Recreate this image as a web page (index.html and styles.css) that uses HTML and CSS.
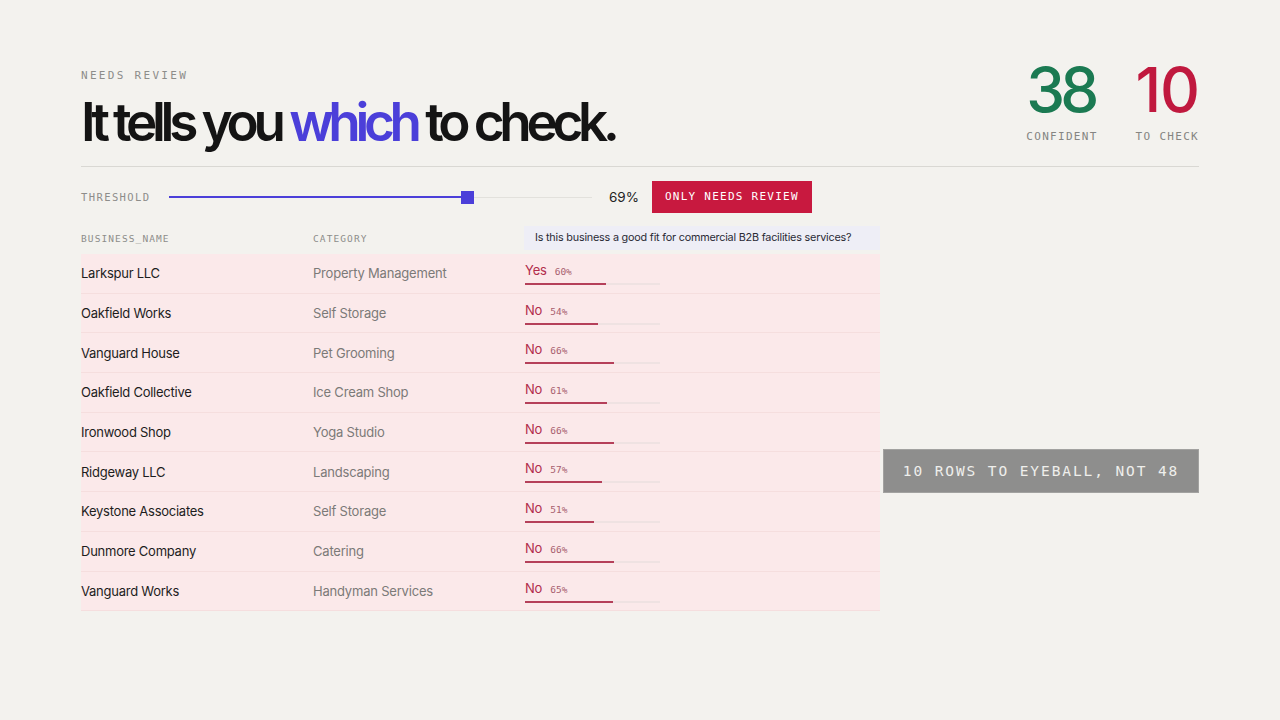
FILE: index.html
```html
<!DOCTYPE html>
<html lang="en">
<head>
  <meta charset="UTF-8">
  <title>Needs review</title>
  <link rel="stylesheet" href="styles.css">
</head>
<body>
<div class="page">
  <div class="top">
    <div class="title-block">
      <div class="eyebrow">NEEDS REVIEW</div>
      <h1 class="headline">It tells you <span class="accent">which</span> to check.</h1>
    </div>
    <div class="stats">
      <div class="stat">
        <div class="stat-num good">38</div>
        <div class="stat-label">CONFIDENT</div>
      </div>
      <div class="stat">
        <div class="stat-num bad">10</div>
        <div class="stat-label">TO CHECK</div>
      </div>
    </div>
  </div>

  <div class="threshold">
    <div class="threshold-label">THRESHOLD</div>
    <div class="slider">
      <div class="slider-fill"></div>
      <div class="slider-handle"></div>
    </div>
    <div class="threshold-value">69%</div>
    <div class="filter-btn">ONLY NEEDS REVIEW</div>
  </div>

  <div class="main">
    <div class="table">
      <div class="thead">
        <div class="th">BUSINESS_NAME</div>
        <div class="th">CATEGORY</div>
        <div class="th question">Is this business a good fit for commercial B2B facilities services?</div>
      </div>

      <div class="row">
        <div class="name">Larkspur LLC</div>
        <div class="cat">Property Management</div>
        <div class="answer">
          <div class="ans-line"><span class="ans">Yes</span><span class="pct">60%</span></div>
          <div class="bar"><div class="bar-fill" style="width: 60%"></div></div>
        </div>
      </div>
      <div class="row">
        <div class="name">Oakfield Works</div>
        <div class="cat">Self Storage</div>
        <div class="answer">
          <div class="ans-line"><span class="ans">No</span><span class="pct">54%</span></div>
          <div class="bar"><div class="bar-fill" style="width: 54%"></div></div>
        </div>
      </div>
      <div class="row">
        <div class="name">Vanguard House</div>
        <div class="cat">Pet Grooming</div>
        <div class="answer">
          <div class="ans-line"><span class="ans">No</span><span class="pct">66%</span></div>
          <div class="bar"><div class="bar-fill" style="width: 66%"></div></div>
        </div>
      </div>
      <div class="row">
        <div class="name">Oakfield Collective</div>
        <div class="cat">Ice Cream Shop</div>
        <div class="answer">
          <div class="ans-line"><span class="ans">No</span><span class="pct">61%</span></div>
          <div class="bar"><div class="bar-fill" style="width: 61%"></div></div>
        </div>
      </div>
      <div class="row">
        <div class="name">Ironwood Shop</div>
        <div class="cat">Yoga Studio</div>
        <div class="answer">
          <div class="ans-line"><span class="ans">No</span><span class="pct">66%</span></div>
          <div class="bar"><div class="bar-fill" style="width: 66%"></div></div>
        </div>
      </div>
      <div class="row">
        <div class="name">Ridgeway LLC</div>
        <div class="cat">Landscaping</div>
        <div class="answer">
          <div class="ans-line"><span class="ans">No</span><span class="pct">57%</span></div>
          <div class="bar"><div class="bar-fill" style="width: 57%"></div></div>
        </div>
      </div>
      <div class="row">
        <div class="name">Keystone Associates</div>
        <div class="cat">Self Storage</div>
        <div class="answer">
          <div class="ans-line"><span class="ans">No</span><span class="pct">51%</span></div>
          <div class="bar"><div class="bar-fill" style="width: 51%"></div></div>
        </div>
      </div>
      <div class="row">
        <div class="name">Dunmore Company</div>
        <div class="cat">Catering</div>
        <div class="answer">
          <div class="ans-line"><span class="ans">No</span><span class="pct">66%</span></div>
          <div class="bar"><div class="bar-fill" style="width: 66%"></div></div>
        </div>
      </div>
      <div class="row">
        <div class="name">Vanguard Works</div>
        <div class="cat">Handyman Services</div>
        <div class="answer">
          <div class="ans-line"><span class="ans">No</span><span class="pct">65%</span></div>
          <div class="bar"><div class="bar-fill" style="width: 65%"></div></div>
        </div>
      </div>
    </div>

    <div class="callout">10 ROWS TO EYEBALL, NOT 48</div>
  </div>
</div>
</body>
</html>
```

FILE: styles.css
```css
body {
  margin: 0;
  background-color: #f3f2ee;
  font-family: Inter, "Noto Sans", sans-serif;
  color: #1a1a1a;
}
.page {
  padding: 58px 81px 0;
}
.top {
  display: flex;
  justify-content: space-between;
  align-items: flex-start;
  padding-bottom: 17px;
  border-bottom: 1px solid #d9d8d3;
}
.eyebrow {
  margin-top: 10px;
  font-family: "DejaVu Sans Mono", monospace;
  font-size: 11px;
  line-height: 16px;
  letter-spacing: 2.3px;
  color: #8d8d8a;
}
.headline {
  margin: 12px 0 0;
  font-size: 53px;
  line-height: 53px;
  font-weight: 600;
  letter-spacing: -0.1em;
  word-spacing: 0.5px;
  color: #141414;
}
.accent {
  color: #4b3fd9;
}
.stats {
  display: flex;
  gap: 38px;
}
.stat-num {
  font-size: 62px;
  line-height: 63px;
  font-weight: 500;
  letter-spacing: -0.08em;
}
.bad {
  color: #c0193e;
  letter-spacing: -0.02em;
}
.good {
  color: #1b7a52;
}
.stat-label {
  margin-top: 9px;
  font-family: "DejaVu Sans Mono", monospace;
  font-size: 11px;
  line-height: 14px;
  letter-spacing: 1.3px;
  color: #858582;
}
.threshold {
  display: flex;
  align-items: center;
  height: 32px;
  margin-top: 14px;
}
.threshold-label {
  width: 88px;
  font-family: "DejaVu Sans Mono", monospace;
  font-size: 10.5px;
  letter-spacing: 1.4px;
  color: #8d8d8a;
}
.slider {
  position: relative;
  width: 423px;
  height: 1px;
  background-color: #e2e1dc;
}
.slider-fill {
  width: 298px;
  height: 2px;
  margin-top: -0.5px;
  background-color: #4b3fd9;
}
.slider-handle {
  position: absolute;
  left: 292px;
  top: -6px;
  width: 13px;
  height: 13px;
  background-color: #4b3fd9;
}
.threshold-value {
  margin-left: 17px;
  font-size: 13.5px;
  color: #222;
}
.filter-btn {
  margin-left: 13px;
  height: 32px;
  line-height: 32px;
  padding: 0 13px;
  background-color: #c8193f;
  color: #fff;
  font-family: "DejaVu Sans Mono", monospace;
  font-size: 11px;
  letter-spacing: 1.25px;
}
.main {
  display: flex;
  gap: 3px;
  margin-top: 13px;
}
.table {
  width: 799px;
}
.thead {
  display: grid;
  grid-template-columns: 232px 211px 356px;
  height: 24px;
  margin-bottom: 4px;
  align-items: center;
}
.th {
  font-family: "DejaVu Sans Mono", monospace;
  font-size: 9.5px;
  letter-spacing: 1.1px;
  color: #8d8d8a;
}
.th.question {
  height: 24px;
  line-height: 24px;
  padding-left: 11px;
  background-color: #eeeef6;
  font-family: Inter, sans-serif;
  font-size: 10.8px;
  letter-spacing: -0.2px;
  color: #2a2a35;
}
.row {
  display: grid;
  grid-template-columns: 232px 212px 355px;
  align-items: center;
  height: 39.7px;
  box-sizing: border-box;
  background-color: #fbe9ea;
  border-bottom: 1px solid #f5dede;
}
.name {
  font-size: 13px;
  letter-spacing: -0.25px;
  color: #1d1d1d;
}
.cat {
  font-size: 13px;
  letter-spacing: -0.2px;
  color: #7b7a78;
}
.answer {
  align-self: start;
  padding-top: 8px;
}
.ans-line {
  display: flex;
  align-items: baseline;
  height: 16px;
  line-height: 16px;
}
.ans {
  font-size: 13px;
  letter-spacing: -0.2px;
  color: #b22d4c;
}
.pct {
  margin-left: 8px;
  font-family: "DejaVu Sans Mono", monospace;
  font-size: 9.5px;
  color: #a8606f;
}
.bar {
  width: 135px;
  height: 2px;
  margin-top: 5px;
  background-color: #efe2e2;
}
.bar-fill {
  height: 2px;
  background-color: #b5405a;
}
.callout {
  align-self: flex-start;
  margin-top: 223px;
  width: 316px;
  height: 44px;
  box-sizing: border-box;
  line-height: 42px;
  text-align: center;
  background-color: #8e8e8d;
  border: 1px solid #a2a2a0;
  color: #efefec;
  font-family: "DejaVu Sans Mono", monospace;
  font-size: 14.5px;
  letter-spacing: 1.9px;
}
```
